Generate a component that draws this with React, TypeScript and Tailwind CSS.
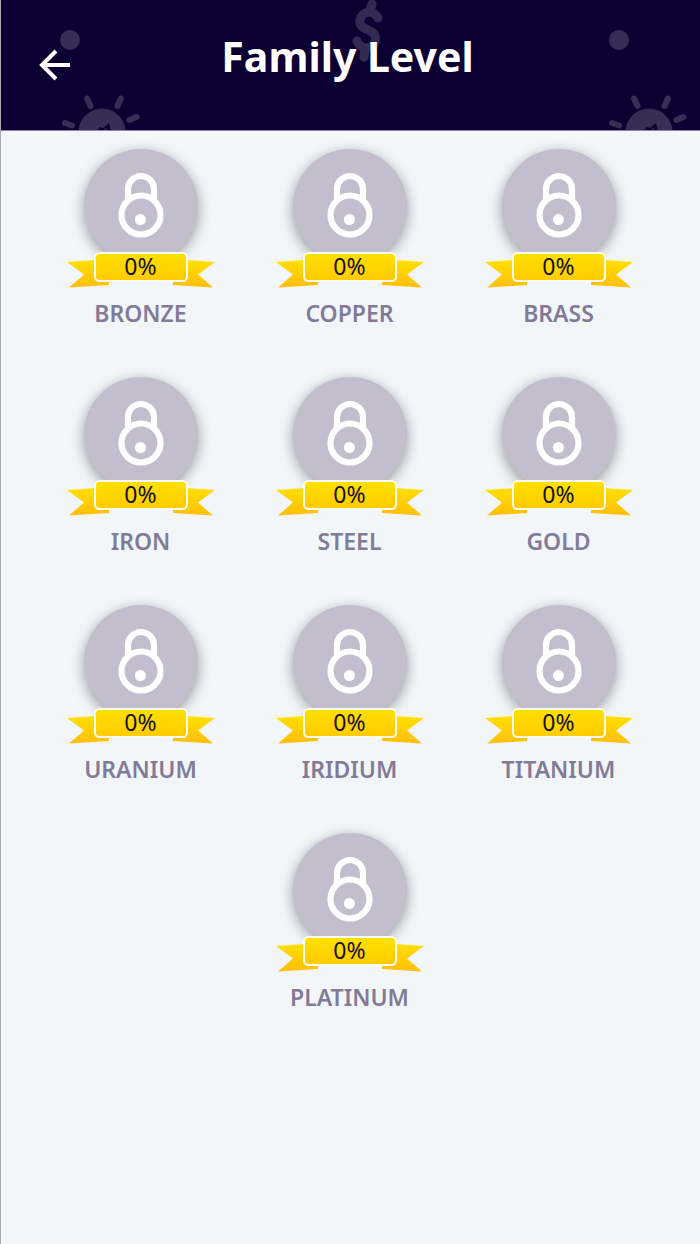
import { useId } from "react";

interface Level {
  name: string;
  progress: number;
}

const LEVELS: Level[] = [
  { name: "BRONZE", progress: 0 },
  { name: "COPPER", progress: 0 },
  { name: "BRASS", progress: 0 },
  { name: "IRON", progress: 0 },
  { name: "STEEL", progress: 0 },
  { name: "GOLD", progress: 0 },
  { name: "URANIUM", progress: 0 },
  { name: "IRIDIUM", progress: 0 },
  { name: "TITANIUM", progress: 0 },
  { name: "PLATINUM", progress: 0 },
];

function BulbDecor({ className, dotX }: { className: string; dotX: number }) {
  return (
    <svg viewBox="0 0 90 130" className={`absolute top-0 h-[130px] w-[90px] ${className}`} aria-hidden="true">
      <circle cx={dotX} cy="40" r="10" fill="#372e56" />
      <circle cx="47" cy="132" r="23.5" fill="#372e56" />
      <g stroke="#372e56" strokeWidth="6" strokeLinecap="round">
        <path d="M32 98.5l3.5 7.5M66 98.5l-3.500 7.500M81.500 117l-7 3M10 123l7 2.500" />
      </g>
      <path d="M43 131l1-4 4 1 6-5 2 8z" fill="#0c0032" />
      <path d="M48 131l3-3 2 3z" fill="#372e56" />
    </svg>
  );
}

function DollarDecor() {
  return (
    <svg
      viewBox="0 0 30 64"
      className="absolute top-0 left-1/2 ml-[3px] h-16 w-[30px] overflow-visible"
      fill="none"
      stroke="#332a53"
      strokeWidth="9"
      strokeLinecap="round"
      aria-hidden="true"
    >
      <path d="M18 4l-2 7M11 50l-1 7" />
      <path d="M24 18C20 10 8 10 6 20C4 31 21 28 21.500 38C22 49 8 52 3 41" />
    </svg>
  );
}

function Header() {
  return (
    <header className="relative flex h-[131px] items-start overflow-hidden border-b border-[#8d84a5] bg-[#0c0032]">
      <BulbDecor className="left-[54px]" dotX={15} />
      <DollarDecor />
      <BulbDecor className="right-2" dotX={17} />
      <div className="flex-1 pt-[49px] pl-[38px]">
        <button type="button" aria-label="Back" className="relative block">
          <svg viewBox="0 0 32 32" className="h-8 w-8" fill="none" stroke="#fff" strokeWidth="4">
            <path d="M31 16H3M17 2L3 16l14 14" />
          </svg>
        </button>
      </div>
      <h1 className="relative pt-7 text-[41px] leading-[56px] font-bold text-white">Family Level</h1>
      <div className="flex-1 pr-11" />
    </header>
  );
}

function LockIcon() {
  return (
    <svg viewBox="0 0 46 66" className="h-[66px] w-[46px]" fill="none" stroke="#fff" strokeWidth="6.2" aria-hidden="true">
      <path d="M10 28V17a13 13 0 0 1 26 0V28" />
      <circle cx="23" cy="43" r="19.5" />
      <circle cx="22.400" cy="47.500" r="5.500" fill="#fff" stroke="none" />
    </svg>
  );
}

function Ribbon({ progress }: { progress: number }) {
  const id = useId();

  return (
    <div className="relative -mt-3 h-[38px] w-[150px]">
      <svg viewBox="0 0 150 38" className="absolute inset-0 h-full w-full" aria-hidden="true">
        <defs>
          <linearGradient id={`${id}tail`} gradientUnits="userSpaceOnUse" x1="0" y1="9" x2="0" y2="37">
            <stop offset="0%" stopColor="#ffe000" />
            <stop offset="100%" stopColor="#ffbd0a" />
          </linearGradient>
          <linearGradient id={`${id}box`} x1="0" y1="0" x2="0" y2="1">
            <stop offset="0%" stopColor="#ffe100" />
            <stop offset="100%" stopColor="#ffca02" />
          </linearGradient>
        </defs>
        <g fill={`url(#${id}tail)`}>
          <path d="M1 11L30 9V30H43V34L3 36.500L18 23.500Z" />
          <path d="M149 11L120 9V30H107V34L147 36.500L132 23.500Z" />
        </g>
        <rect x="29" y="2" width="92" height="28" rx="4.500" fill={`url(#${id}box)`} stroke="#fffdf0" strokeWidth="2" />
      </svg>
      <p className="relative text-center text-[23px] leading-[30px] text-[#14101c]">{progress}%</p>
    </div>
  );
}

function LevelBadge({ level }: { level: Level }) {
  return (
    <li className="mb-12 flex w-1/3 flex-col items-center">
      <div className="flex h-[114px] w-[114px] justify-center rounded-full bg-[#c3becd] pt-[23px] shadow-[0_4px_14px_rgba(0,0,0,0.38)]">
        <LockIcon />
      </div>
      <Ribbon progress={level.progress} />
      <h2 className="mt-2 text-[23px] leading-8 font-semibold text-[#827b98]">{level.name}</h2>
    </li>
  );
}

export default function App() {
  return (
    <div className="min-h-screen border-l border-[#a5a8b0] bg-[#f2f6f9] font-['Noto_Sans',sans-serif]">
      <Header />
      <main className="pt-[18px] pr-[37px] pl-[35px]">
        <ul className="flex flex-wrap justify-center">
          {LEVELS.map((level) => (
            <LevelBadge key={level.name} level={level} />
          ))}
        </ul>
      </main>
    </div>
  );
}
